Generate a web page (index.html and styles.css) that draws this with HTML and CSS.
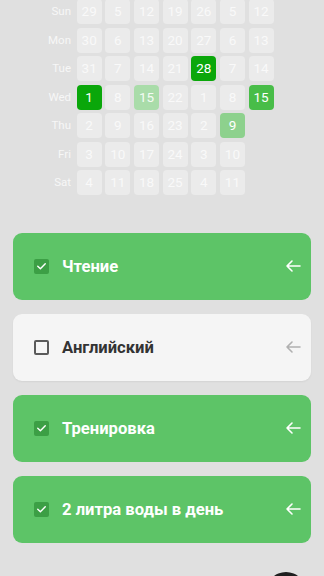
FILE: index.html
```html
<!DOCTYPE html>
<html lang="ru">
<head>
<meta charset="utf-8">
<link rel="stylesheet" href="styles.css">
</head>
<body>
<div class="page">
  <div class="cal">
    <div class="lbl">Sun</div>
    <div class="c">29</div><div class="c">5</div><div class="c">12</div><div class="c">19</div><div class="c">26</div><div class="c">5</div><div class="c">12</div>
    <div class="lbl">Mon</div>
    <div class="c">30</div><div class="c">6</div><div class="c">13</div><div class="c">20</div><div class="c">27</div><div class="c">6</div><div class="c">13</div>
    <div class="lbl">Tue</div>
    <div class="c">31</div><div class="c">7</div><div class="c">14</div><div class="c">21</div><div class="c g4">28</div><div class="c">7</div><div class="c">14</div>
    <div class="lbl">Wed</div>
    <div class="c g4">1</div><div class="c">8</div><div class="c g1">15</div><div class="c">22</div><div class="c">1</div><div class="c">8</div><div class="c g3">15</div>
    <div class="lbl">Thu</div>
    <div class="c">2</div><div class="c">9</div><div class="c">16</div><div class="c">23</div><div class="c">2</div><div class="c g2">9</div><div class="empty"></div>
    <div class="lbl">Fri</div>
    <div class="c">3</div><div class="c">10</div><div class="c">17</div><div class="c">24</div><div class="c">3</div><div class="c">10</div><div class="empty"></div>
    <div class="lbl">Sat</div>
    <div class="c">4</div><div class="c">11</div><div class="c">18</div><div class="c">25</div><div class="c">4</div><div class="c">11</div><div class="empty"></div>
  </div>

  <div class="list">
    <div class="card done">
      <span class="box"><svg viewBox="0 0 16 16" width="16" height="16"><polyline points="4,8.3 6.8,11 12,5.6" fill="none" stroke="#fff" stroke-width="1.5" stroke-linecap="round" stroke-linejoin="round"/></svg></span>
      <span class="title">Чтение</span>
      <svg class="arrow" viewBox="0 0 16 14" width="16" height="14"><path d="M15 7H2M7 2L2 7l5 5" fill="none" stroke="currentColor" stroke-width="1.6" stroke-linecap="round" stroke-linejoin="round"/></svg>
    </div>
    <div class="card todo">
      <span class="box"></span>
      <span class="title">Английский</span>
      <svg class="arrow" viewBox="0 0 16 14" width="16" height="14"><path d="M15 7H2M7 2L2 7l5 5" fill="none" stroke="currentColor" stroke-width="1.6" stroke-linecap="round" stroke-linejoin="round"/></svg>
    </div>
    <div class="card done">
      <span class="box"><svg viewBox="0 0 16 16" width="16" height="16"><polyline points="4,8.3 6.8,11 12,5.6" fill="none" stroke="#fff" stroke-width="1.5" stroke-linecap="round" stroke-linejoin="round"/></svg></span>
      <span class="title">Тренировка</span>
      <svg class="arrow" viewBox="0 0 16 14" width="16" height="14"><path d="M15 7H2M7 2L2 7l5 5" fill="none" stroke="currentColor" stroke-width="1.6" stroke-linecap="round" stroke-linejoin="round"/></svg>
    </div>
    <div class="card done">
      <span class="box"><svg viewBox="0 0 16 16" width="16" height="16"><polyline points="4,8.3 6.8,11 12,5.6" fill="none" stroke="#fff" stroke-width="1.5" stroke-linecap="round" stroke-linejoin="round"/></svg></span>
      <span class="title">2 литра воды в день</span>
      <svg class="arrow" viewBox="0 0 16 14" width="16" height="14"><path d="M15 7H2M7 2L2 7l5 5" fill="none" stroke="currentColor" stroke-width="1.6" stroke-linecap="round" stroke-linejoin="round"/></svg>
    </div>
  </div>
  <div class="fab"></div>
</div>
</body>
</html>
```

FILE: styles.css
```css
html, body {
  margin: 0;
  padding: 0;
  background: #e0e0e0;
}
body {
  font-family: Roboto, "Noto Sans", sans-serif;
  width: 324px;
  height: 576px;
  overflow: hidden;
}
.page {
  position: relative;
  height: 576px;
  overflow: hidden;
}
.cal {
  display: grid;
  grid-template-columns: 31px repeat(7, 25px);
  grid-auto-rows: 25px;
  column-gap: 3.67px;
  row-gap: 3.58px;
  margin: -1px 0 0 42px;
}
.lbl {
  color: #f7f7f7;
  font-size: 11.5px;
  text-align: right;
  padding-right: 2px;
  line-height: 25px;
}
.c {
  background: #ebebeb;
  border-radius: 4px;
  color: #f9f9f9;
  font-size: 13.5px;
  text-align: center;
  line-height: 25px;
}
.c.g4 { background: #0aa70a; color: #fff; }
.c.g3 { background: #48bd48; color: #fff; }
.c.g2 { background: #8dd18d; color: #fff; }
.c.g1 { background: #a9dca9; color: #f4fbf4; }

.list {
  display: flex;
  flex-direction: column;
  gap: 14px;
  margin: 37.5px 13px 0 13px;
}
.card {
  height: 67px;
  border-radius: 9px;
  display: flex;
  align-items: center;
  padding: 0 10px 0 21px;
  box-sizing: border-box;
}
.card.done {
  background: #5dc467;
  color: #fff;
}
.card.todo {
  background: #f5f5f5;
  color: #333;
  box-shadow: 0 1px 2px rgba(0,0,0,0.06);
}
.box {
  width: 15px;
  height: 15px;
  box-sizing: border-box;
  border-radius: 2px;
  display: flex;
  align-items: center;
  justify-content: center;
  flex: none;
}
.done .box {
  background: #3c9f45;
}
.todo .box {
  border: 2px solid #5a5a5a;
}
.title {
  margin-left: 13px;
  font-size: 16.6px;
  font-weight: 700;
  flex: 1;
}
.arrow {
  flex: none;
}
.done .arrow { color: #ffffff; }
.todo .arrow { color: #b0b0b0; }

.fab {
  position: absolute;
  left: 266px;
  top: 572px;
  width: 40px;
  height: 40px;
  border-radius: 50%;
  background: #1f1f1f;
}
```
